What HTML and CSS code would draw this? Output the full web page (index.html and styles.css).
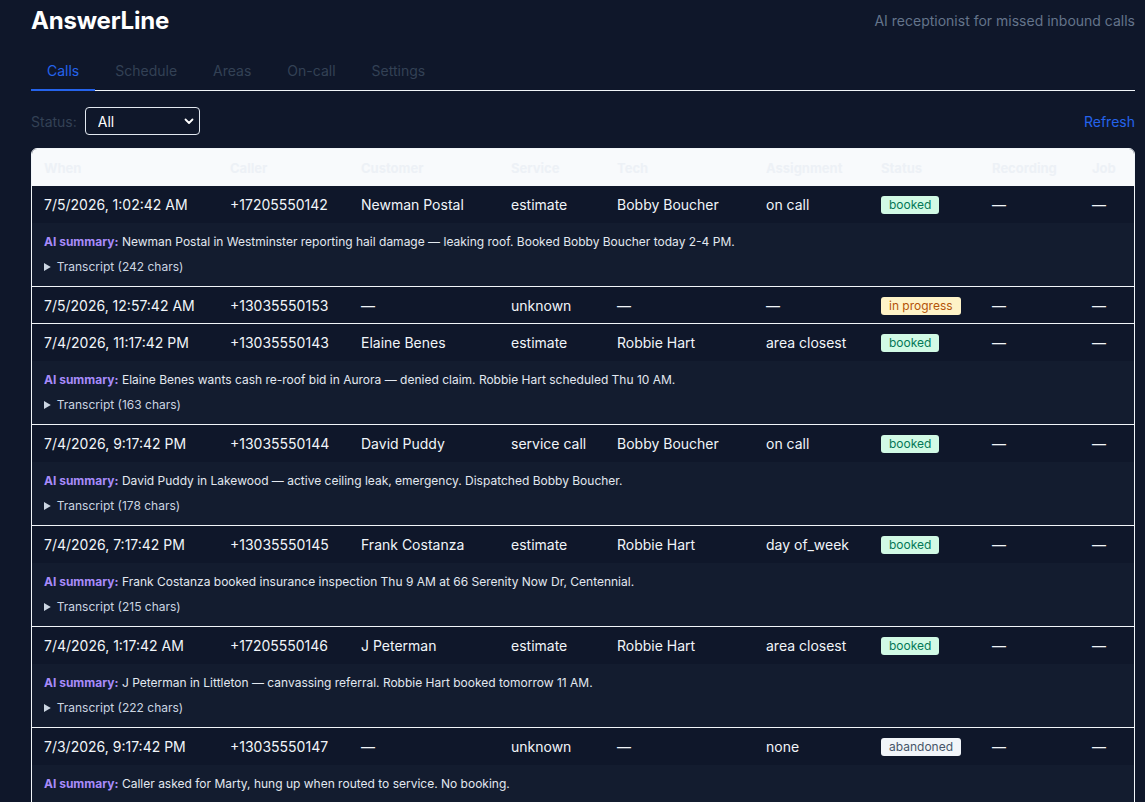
FILE: index.html
```html
<!DOCTYPE html>
<html lang="en">
<head>
  <meta charset="UTF-8" />
  <meta name="viewport" content="width=device-width, initial-scale=1.0"/>
  <title>AnswerLine</title>
  <link rel="stylesheet" href="styles.css">
</head>
<body>
  <div class="page">
    <header class="top">
      <h1 class="brand">AnswerLine</h1>
      <span class="tagline">AI receptionist for missed inbound calls</span>
    </header>

    <nav class="tabs">
      <a class="tab active" href="#">Calls</a>
      <a class="tab" href="#">Schedule</a>
      <a class="tab" href="#">Areas</a>
      <a class="tab" href="#">On-call</a>
      <a class="tab" href="#">Settings</a>
    </nav>

    <div class="toolbar">
      <label class="filter">
        <span>Status:</span>
        <span class="select-wrap">
          <select id="status">
            <option>All</option>
            <option>booked</option>
            <option>in progress</option>
            <option>abandoned</option>
          </select>
          <svg class="chev" viewBox="0 0 12 12" width="12" height="12"><path d="M2.5 4.5 6 8l3.5-3.5" fill="none" stroke="#fff" stroke-width="1.8" stroke-linecap="round" stroke-linejoin="round"/></svg>
        </span>
      </label>
      <a class="refresh" href="#">Refresh</a>
    </div>

    <div class="card">
      <table class="calls">
        <colgroup>
          <col style="width:186px"><col style="width:131px"><col style="width:150px">
          <col style="width:106px"><col style="width:149px"><col style="width:115px">
          <col style="width:111px"><col style="width:100px"><col style="width:54px">
        </colgroup>
        <thead>
          <tr>
            <th>When</th><th>Caller</th><th>Customer</th><th>Service</th><th>Tech</th>
            <th>Assignment</th><th>Status</th><th>Recording</th><th>Job</th>
          </tr>
        </thead>
        <tbody>
          <tr class="main">
            <td>7/5/2026, 1:02:42 AM</td><td>+17205550142</td><td>Newman Postal</td><td>estimate</td>
            <td>Bobby Boucher</td><td>on call</td><td><span class="badge booked">booked</span></td><td>—</td><td>—</td>
          </tr>
          <tr class="summary">
            <td colspan="9">
              <div class="ai"><b>AI summary:</b> Newman Postal in Westminster reporting hail damage — leaking roof. Booked Bobby Boucher today 2-4 PM.</div>
              <details><summary>Transcript (242 chars)</summary></details>
            </td>
          </tr>

          <tr class="main solo">
            <td>7/5/2026, 12:57:42 AM</td><td>+13035550153</td><td>—</td><td>unknown</td>
            <td>—</td><td>—</td><td><span class="badge progress">in progress</span></td><td>—</td><td>—</td>
          </tr>

          <tr class="main">
            <td>7/4/2026, 11:17:42 PM</td><td>+13035550143</td><td>Elaine Benes</td><td>estimate</td>
            <td>Robbie Hart</td><td>area closest</td><td><span class="badge booked">booked</span></td><td>—</td><td>—</td>
          </tr>
          <tr class="summary">
            <td colspan="9">
              <div class="ai"><b>AI summary:</b> Elaine Benes wants cash re-roof bid in Aurora — denied claim. Robbie Hart scheduled Thu 10 AM.</div>
              <details><summary>Transcript (163 chars)</summary></details>
            </td>
          </tr>

          <tr class="main">
            <td>7/4/2026, 9:17:42 PM</td><td>+13035550144</td><td>David Puddy</td><td>service call</td>
            <td>Bobby Boucher</td><td>on call</td><td><span class="badge booked">booked</span></td><td>—</td><td>—</td>
          </tr>
          <tr class="summary">
            <td colspan="9">
              <div class="ai"><b>AI summary:</b> David Puddy in Lakewood — active ceiling leak, emergency. Dispatched Bobby Boucher.</div>
              <details><summary>Transcript (178 chars)</summary></details>
            </td>
          </tr>

          <tr class="main">
            <td>7/4/2026, 7:17:42 PM</td><td>+13035550145</td><td>Frank Costanza</td><td>estimate</td>
            <td>Robbie Hart</td><td>day of_week</td><td><span class="badge booked">booked</span></td><td>—</td><td>—</td>
          </tr>
          <tr class="summary">
            <td colspan="9">
              <div class="ai"><b>AI summary:</b> Frank Costanza booked insurance inspection Thu 9 AM at 66 Serenity Now Dr, Centennial.</div>
              <details><summary>Transcript (215 chars)</summary></details>
            </td>
          </tr>

          <tr class="main">
            <td>7/4/2026, 1:17:42 AM</td><td>+17205550146</td><td>J Peterman</td><td>estimate</td>
            <td>Robbie Hart</td><td>area closest</td><td><span class="badge booked">booked</span></td><td>—</td><td>—</td>
          </tr>
          <tr class="summary">
            <td colspan="9">
              <div class="ai"><b>AI summary:</b> J Peterman in Littleton — canvassing referral. Robbie Hart booked tomorrow 11 AM.</div>
              <details><summary>Transcript (222 chars)</summary></details>
            </td>
          </tr>

          <tr class="main">
            <td>7/3/2026, 9:17:42 PM</td><td>+13035550147</td><td>—</td><td>unknown</td>
            <td>—</td><td>none</td><td><span class="badge abandoned">abandoned</span></td><td>—</td><td>—</td>
          </tr>
          <tr class="summary">
            <td colspan="9">
              <div class="ai"><b>AI summary:</b> Caller asked for Marty, hung up when routed to service. No booking.</div>
              <details><summary>Transcript (131 chars)</summary></details>
            </td>
          </tr>
        </tbody>
      </table>
    </div>
  </div>
</body>
</html>
```

FILE: styles.css
```css
* {
  box-sizing: border-box;
}
html, body {
  margin: 0;
  padding: 0;
  background: #0f172a;
  color: #f1f5f9;
  font-family: Inter, "Noto Sans", sans-serif;
}
a {
  text-decoration: none;
}
.page {
  margin: 0 10px 0 31px;
  padding-top: 4px;
  padding-bottom: 24px;
}

/* header */
.top {
  display: flex;
  justify-content: space-between;
  align-items: center;
  height: 32px;
}
.brand {
  margin: 0;
  font-size: 24px;
  font-weight: 700;
  color: #fff;
  letter-spacing: -0.2px;
}
.tagline {
  font-size: 14px;
  color: #64748b;
}

/* tabs */
.tabs {
  display: flex;
  gap: 4px;
  margin-top: 17px;
  border-bottom: 1px solid #f1f5f9;
}
.tab {
  padding: 9px 16px 10px;
  font-size: 14px;
  line-height: 17px;
  color: #334155;
  border-bottom: 2px solid transparent;
  margin-bottom: -1px;
}
.tab.active {
  color: #2563eb;
  border-bottom-color: #2563eb;
}

/* filter bar */
.toolbar {
  display: flex;
  justify-content: space-between;
  align-items: center;
  margin-top: 16px;
}
.filter {
  display: flex;
  align-items: center;
  gap: 8px;
  font-size: 14px;
  color: #334155;
}
.select-wrap {
  position: relative;
  display: inline-block;
}
.select-wrap select {
  appearance: none;
  -webkit-appearance: none;
  width: 115px;
  height: 28px;
  padding: 0 24px 0 12px;
  background: #0f172a;
  color: #fff;
  border: 1px solid #e2e8f0;
  border-radius: 4px;
  font-family: inherit;
  font-size: 14px;
  outline: none;
}
.chev {
  position: absolute;
  right: 5px;
  top: 8px;
  pointer-events: none;
}
.refresh {
  color: #2563eb;
  font-size: 14px;
}

/* table */
.card {
  margin-top: 13px;
  border: 1px solid #f1f5f9;
  border-radius: 6px;
  overflow: hidden;
}
.calls {
  width: 100%;
  border-collapse: collapse;
  table-layout: fixed;
}
.calls th {
  background: #f8fafc;
  color: #edf1f6;
  font-size: 13px;
  font-weight: 700;
  text-align: left;
  padding: 9px 12px;
  height: 37px;
}
.calls td {
  padding: 9px 12px;
  font-size: 14px;
  line-height: 18px;
  white-space: nowrap;
}
.main td {
  background: #0f172a;
}
.main.solo td {
  padding-bottom: 8px;
  border-bottom: 1px solid #f1f5f9;
}
.summary td {
  background: #131c2f;
  padding: 10px 12px 10px;
  font-size: 12px;
  border-bottom: 1px solid #f1f5f9;
  color: #e2e8f0;
}
.ai b {
  color: #a78bfa;
  font-weight: 700;
}
.summary details {
  margin-top: 7px;
  color: #cbd5e1;
}
.summary summary {
  cursor: pointer;
}

/* status badges */
.badge {
  display: inline-block;
  padding: 0 8px;
  font-size: 12px;
  line-height: 18px;
  border-radius: 3px;
}
.booked {
  background: #d1fae5;
  color: #047857;
}
.progress {
  background: #fef3c7;
  color: #b45309;
}
.abandoned {
  background: #f1f5f9;
  color: #475569;
}
```
